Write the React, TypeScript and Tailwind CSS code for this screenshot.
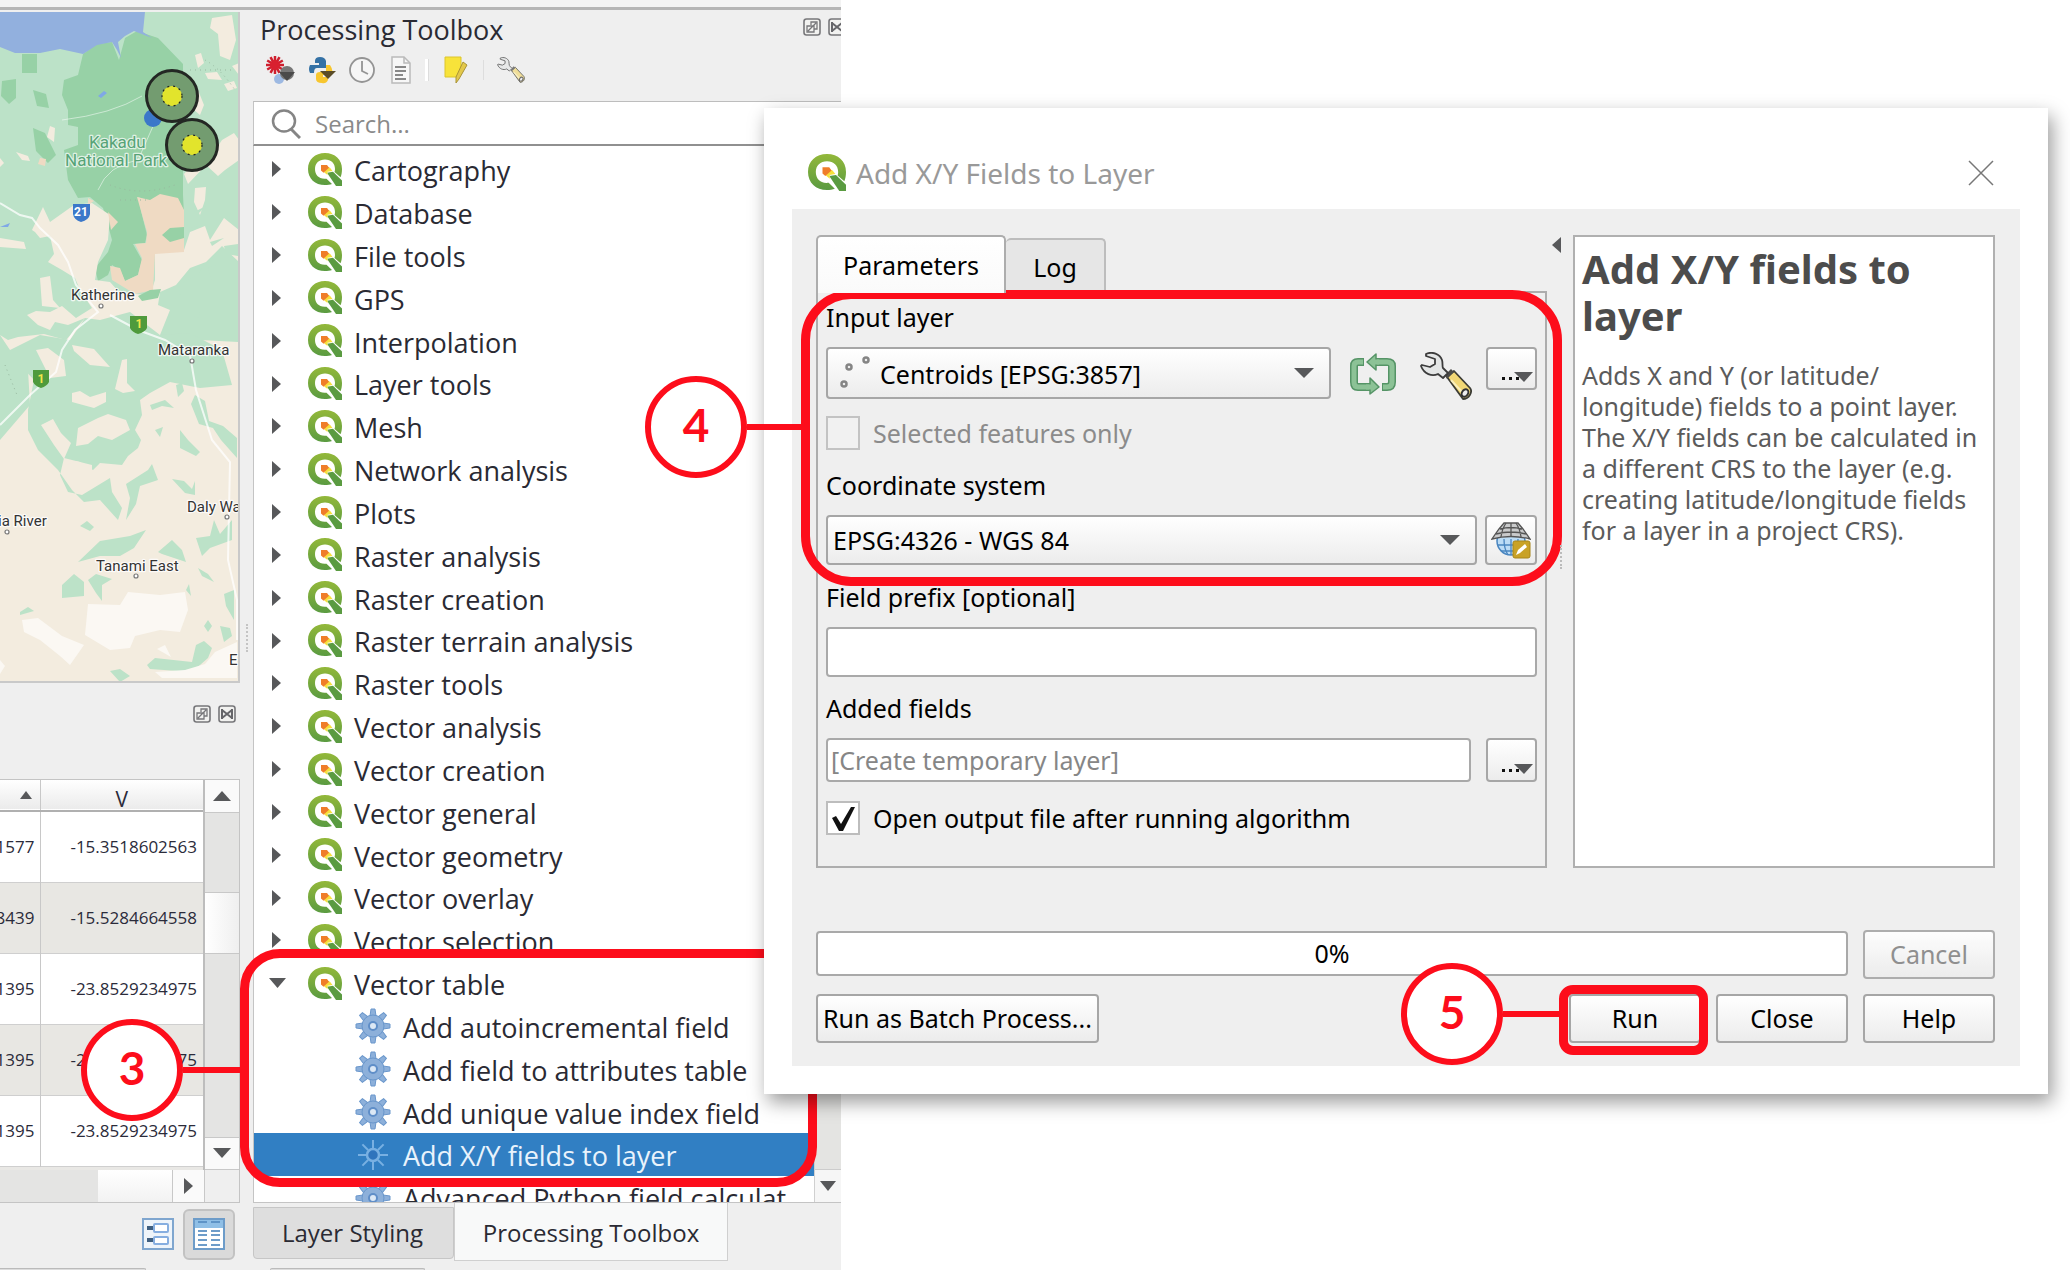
import React from 'react';

const CATEGORIES = [
  'Cartography', 'Database', 'File tools', 'GPS', 'Interpolation', 'Layer tools', 'Mesh',
  'Network analysis', 'Plots', 'Raster analysis', 'Raster creation', 'Raster terrain analysis',
  'Raster tools', 'Vector analysis', 'Vector creation', 'Vector general', 'Vector geometry',
  'Vector overlay', 'Vector selection',
];
const ALGORITHMS = [
  'Add autoincremental field', 'Add field to attributes table', 'Add unique value index field',
  'Add X/Y fields to layer',
];
const ROWS = [
  ['1577', '-15.3518602563'],
  ['8439', '-15.5284664558'],
  ['1395', '-23.8529234975'],
  ['1395', '-23.8529234975'],
  ['1395', '-23.8529234975'],
];

/* ---------- icons ---------- */

function QgisLogo({ className }: { className: string }) {
  return (
    <svg viewBox="0 0 34 36" className={className} preserveAspectRatio="none" aria-hidden="true">
      <defs>
        <linearGradient id="qg" x1="0" y1="0" x2="0" y2="1">
          <stop offset="0" stopColor="#93b83a" />
          <stop offset="1" stopColor="#5a9b41" />
        </linearGradient>
      </defs>
      <path fill="url(#qg)" fillRule="evenodd" d="M17 0C7 0 0 7 0 17.500S7 35 17 35c2.500 0 5-.5 7-1.300L18.500 28C11 29 7 24 7 17.500S11 7 17 7 27 11 27 17.500c0 1.200-.2 2.300-.5 3.300L32.500 26.500c1-2.500 1.500-5.700 1.500-9C34 7 27 0 17 0z" />
      <path fill="#5a9b41" d="M19 21.500 25 20.500l9 9.500v6h-6z" />
      <path fill="#f6e03c" d="m19 14.500 3 1.500 2.500 3.500-5 1V24l-3.500-3z" />
      <path fill="#ef7d29" d="M13 13H19l2 3-5.500 5.500-2.500-2.500z" />
    </svg>
  );
}

function Gear({ selected = false }: { selected?: boolean }) {
  const fill = selected ? '#2f74bc' : '#8db0da';
  const line = selected ? '#78b0e2' : '#6a97cc';
  return (
    <svg viewBox="-18 -18 36 36" className="h-[36px] w-[36px] shrink-0" aria-hidden="true">
      {[0, 45, 90, 135, 180, 225, 270, 315].map((a) => (
        <path key={a} d={selected ? 'M0-7V-15' : 'M-3-10-2-17H2L3-10z'} fill={fill} stroke={line} strokeWidth={selected ? 2 : 1} transform={`rotate(${a})`} />
      ))}
      <circle r={selected ? 6 : 11} fill={fill} stroke={line} strokeWidth={selected ? 2.5 : 1} />
      {!selected && <circle r="4" fill="#dce8f5" stroke="#5f8ec8" strokeWidth="2" />}
    </svg>
  );
}

function Wrench({ className }: { className: string }) {
  return (
    <svg viewBox="0 0 52 48" className={className} aria-hidden="true">
      <path d="M27 25 34 19 50 36c3 4-1 11-7 11z" fill="#f1d775" stroke="#3c3c34" strokeWidth="1.800" strokeLinejoin="round" />
      <path d="m25 23 6-6 3 3-7 7z" fill="#4a4a48" />
      <path d="M6 2C12-1 20 2 22 8c1 3 0 6 1 8l5 5-5 5-5-4C12 25 4 22 1 14l1-1 8 2 5-3V7L6 4z" fill="#e4e6e6" stroke="#3c3c3c" strokeWidth="1.800" strokeLinejoin="round" />
      <path d="m31 28 12 13" stroke="#fbf0bb" strokeWidth="2" />
      <ellipse cx="45" cy="41" rx="3" ry="4" fill="#eee" stroke="#333" strokeWidth="2" transform="rotate(35 45 41)" />
    </svg>
  );
}

function Iterate() {
  return (
    <svg viewBox="0 0 48 42" className="h-[42px] w-[48px]" aria-hidden="true">
      {['#559466', '#8cc296'].map((c, i) => (
        <g key={c} fill="none" stroke={c} strokeWidth={i ? 5 : 8} strokeLinejoin="round">
          <path d={i ? 'M14 9H9Q5 9 5 13V29Q5 34 9 34H22' : 'M15 9H9Q5 9 5 13V29Q5 34 9 34H22'} />
          <path d={i ? 'M34 34H38Q43 34 43 29V13Q43 9 38 9H27' : 'M33 34H38Q43 34 43 29V13Q43 9 38 9H27'} />
        </g>
      ))}
      <path d="M27 1v16L18 9z" fill="#8cc296" stroke="#559466" strokeWidth="1.500" strokeLinejoin="round" />
      <path d="M21 25v16l9-7z" fill="#8cc296" stroke="#559466" strokeWidth="1.500" strokeLinejoin="round" />
      <path d="M25 9h5M17 34h6" stroke="#8cc296" strokeWidth="5" />
    </svg>
  );
}

function Globe() {
  return (
    <svg viewBox="0 0 40 38" className="h-[38px] w-[40px]" aria-hidden="true">
      <circle cx="20" cy="20" r="14" fill="#bcdcf5" stroke="#4a86c0" strokeWidth="1.500" />
      <path d="M7 24h26M10 30h20M20 18v16M13 18q0 10 4 16M27 18q0 10-4 16" fill="none" stroke="#4a86c0" strokeWidth="1.300" />
      <path d="M13 2h14l5 6 7 10q-19-5-38 0L8 8z" fill="#c9cacb" stroke="#555" strokeWidth="1.300" />
      <path d="M20 2v14M15 2q-4 6-5 14M25 2q4 6 5 14M9 8q11-3 22 0M5 13q15-4 30 0" fill="none" stroke="#555" strokeWidth="1.300" />
      <rect x="22" y="20" width="17" height="17" rx="2" fill="#c9a227" stroke="#a8861a" />
      <path d="m25 34 2-5 7-6 2 3-7 6z" fill="#fff" />
    </svg>
  );
}

function DockIcons() {
  return (
    <div className="flex gap-[7px]">
      {['Float panel', 'Close panel'].map((n, i) => (
        <button key={n} aria-label={n} className="h-[18px] w-[18px] shrink-0">
          <svg viewBox="0 0 18 18" className="h-full w-full">
            <rect x="1" y="1" width="16" height="16" rx="2.500" fill="#f2f2f0" stroke="#77777a" strokeWidth="1.600" />
            {i === 0 ? (
              <path d="M4 8h7v6H4zM8 7V4h6v7h-3M5 13l8-8" fill="none" stroke="#77777a" strokeWidth="1.300" />
            ) : (
              <path d="M4 5l10 8M14 5 4 13M4 4v10M14 4v10" fill="none" stroke="#66666a" strokeWidth="2" />
            )}
          </svg>
        </button>
      ))}
    </div>
  );
}

function Tri({ dir, className }: { dir: 'up' | 'down' | 'left' | 'right'; className: string }) {
  const d = { up: 'M0 10H10L5 0z', down: 'M0 0H10L5 10z', left: 'M10 0V10L0 5z', right: 'M0 0V10L10 5z' }[dir];
  return (
    <svg viewBox="0 0 10 10" preserveAspectRatio="none" className={className} aria-hidden="true">
      <path d={d} fill="#57585a" />
    </svg>
  );
}

/* ---------- map ---------- */

function MapCanvas() {
  const label = { fontFamily: 'Roboto, sans-serif', stroke: '#fff', strokeWidth: 2.5, paintOrder: 'stroke' as const, strokeLinejoin: 'round' as const };
  return (
    <svg viewBox="0 12 239 669" className="block h-[669px] w-full" preserveAspectRatio="xMinYMin slice" role="img" aria-label="Map canvas">
      <rect y="12" width="239" height="669" fill="#bce2c8" />
      <g fill="#97d1a6">
        <path d="M83 54 97 44 112 42 119 60 125 38 137 31 158 38 183 64V195L184 215 138 197 142 215 147 235 145 243 133 244 142 260 138 275 125 281 120 270 112 265 108 275 98 281 95 268 108 252 112 240 108 225 103 208 90 197 78 198 68 180 64 150 78 145V127L68 125V110L62 95 64 80 78 75Z" />
        <path d="M22 54h15v19H22zM2 81l14-2v19l-7 6-8-8zM33 90l13 4 3 14-12-2zM33 128l12 5 11 22-8 8-12-12z" />
      </g>
      <path d="M0 12H145L143 32 152 38 134 31 125 36 118 42 121 58 117 50 112 42 97 45 83 54 60 49 40 53 15 53 0 47Z" fill="#92b0de" />
      <path d="m98 96 6-5 3 2-6 5zM0 227l10-4-2 4z" fill="#7fa8e6" />
      <g fill="#f3ecdf">
        <path d="M212 18 232 15 236 40 230 60 220 56 218 34 210 28Z" />
        <path d="m195 55 6-2 3 10-6 5zM205 73l12-1 5 8-14-1zM224 84l10-3 3 7-9 3zM232 66l7-3v12zM196 85l8 20-4 10-7-6zM50 126l5 2-1 14-7-5zM16 152l12 4 2 5-8-1zM0 158l4 5-4 4z" />
        <path d="M184 174 196 160 206 150 214 152 222 140 234 133 239 140V160L225 170 218 176 206 165 188 184Z" />
        <path d="M195 188 206 187 205 200 200 215 194 202ZM0 238l24 4 2 7-26-2z" />
        <path d="M32 230 43 207 50 222 74 205 92 203 110 215 108 240 98 262 95 280 110 282 120 293 150 295 155 280V250L184 250 190 232 205 226 210 240 224 218 239 230V262L222 246 206 262 190 268 176 285 160 292 158 305 170 310 160 335 200 340 239 342V681H0V440L30 405 28 370 20 345 10 350 0 335 8 340 18 337 44 334 66 340 85 318 68 325 55 322 50 330 38 325 27 315 36 311 50 312 62 306 76 318 92 308 80 290 75 278 62 270 48 262 54 254 50 236 40 238 35 232Z" />
        <path d="M40 278 50 276 53 300 60 308 42 306Z" />
      </g>
      <path d="M137 197 150 200 160 194 178 198 184 210V252L155 254 153 290 135 294 112 280 110 266 120 268 125 281 138 275 142 258 135 244 146 243 147 232ZM88 198l6 3-6 4zM108 212l10 10-7 8zM40 158l6 1-1 7-7-2z" fill="#efdac3" />
      <g fill="#97d1a6">
        <path d="M162 235 170 228 184 227V238L170 242ZM138 296 150 290 161 289 158 298 142 301ZM201 363l10-3 2 10-11 1z" />
      </g>
      <g fill="#bce2c8">
        <path d="M20 345 40 335 70 340 85 318 100 320 130 312 160 335 190 333 222 350 232 385 200 388 170 382 150 393 140 400 142 415 135 430 141 440 138 448 128 456 122 465 100 463 93 470 80 462 64 458 60 475 68 492 82 495 110 478 112 492 122 508 118 520 100 500 84 502 72 490 58 470 38 450 28 430 28 410 34 380 20 365Z" />
        <path d="M174 300 184 282 198 275 202 268 200 276 188 288ZM208 268l8-3 4 8-8 7zM222 300l6-6 4 8-8 6zM192 316l8-4-2 6zM194 212l12-6-8 8zM210 242l14-4-12 8zM224 246l14-2v12l-12-2zM188 228l10-2-6 5z" />
        <path d="M150 405 165 400 174 408 162 406 152 410ZM176 385l6-2 2 8-6 6zM155 430l8-3-3 10zM180 430l8 10 12 12-4 4-16-8zM195 395l10 6 4 20 14 5 14 12v20l-16-18-8-12-14-4-8-20zM148 470l4-6 6 16-18 6-4 18-10 16 4-22-4-14zM172 479l12 2 8 8 3-8v14l-10-2z" />
        <path d="M78 562 100 541 130 536 146 530 134 548 120 556 100 556ZM158 552 172 540 182 550 186 562 162 554ZM62 585 74 574 84 582V596L62 598ZM88 580l8-6 16 5-10 6v16l-6-8zM80 526l7-5 7 6-4 4zM20 612l8-5 6 4-14 4zM196 538l14-2 4-16 6 14 12-14v20l-22 8-8 8zM198 568l10 6 6 8-12-6zM186 590l3-6 2 12zM204 626l4-6 4 6-4 6zM220 626l10 2 2 8-8 6zM224 594l10-4v30l-8-14z" />
        <path d="M147 665 155 658 192 662 196 645 204 641 212 648 208 658 192 672 150 669ZM110 671l10-2 10 7-10 6z" />
      </g>
      <g fill="#f3ecdf">
        <path d="M72 393 80 391 90 397 106 392V402L94 408 72 402ZM78 428l20-10 10-4 18 6 4 10-18 10-14-4-10 8-12 2zM41 425l12-6 8 14 10 10-7 16-10-14zM66 465l10-4 16 4v10l-12 6zM72 345l22 4 16 18-20-2-16-14zM122 360l5-1v24l8 8-12 2-8-4zM36 350l12-2 16 12 2 16-16 2z" />
      </g>
      <g fill="#fbf8f3">
        <path d="M88 604 120 605 128 592 160 595 185 592 188 610 180 632 160 630 135 636 130 648 110 650 85 635ZM22 620 38 618 62 636 84 645 70 665 60 656 40 640 24 632ZM0 660l5 6-5 8zM165 645l6 12-14-8zM155 672l30-2 20-6 10-12 22-10v36H162z" />
      </g>
      <g fill="none" stroke="#fff" strokeOpacity=".75" strokeWidth="2">
        <path d="M0 203 20 215 32 218 40 228 58 245 68 262 76 285 98 312 75 330 62 350 56 372 30 395 0 425" />
        <path d="M110 315 138 330 165 340 190 355 196 390 212 440 230 462 228 560 237 600V640" />
        <path d="M62 120q50-6 80-24M98 190q10-25 40-30l20-45" strokeWidth="1" strokeOpacity=".5" />
      </g>
      <g fill="none" stroke="#98b89f" strokeDasharray="1 4" strokeWidth="1">
        <path d="M190 70h45M205 60q15 8 30 30M110 185q30 12 65 0M5 365l12 30M120 200h30" />
      </g>
      <path d="M73 204h17v10q-1 6-9 8-7-2-8-8z" fill="#3b78c9" />
      <circle cx="153" cy="118" r="9" fill="#3b78c9" />
      <path d="M130 316h17v12q-2 4-9 6-6-2-8-6zM33 370h16v12q-2 4-8 6-6-2-8-6z" fill="#4f9a3c" />
      <g fontFamily="Roboto, sans-serif" fontWeight="700" fontSize="12" textAnchor="middle">
        <text x="81" y="216" fill="#fff">21</text>
        <text x="139" y="328" fill="#f2e64b">1</text>
        <text x="41" y="383" fill="#f2e64b">1</text>
      </g>
      <g {...label} fontSize="17" fill="#56a377" strokeOpacity=".7">
        <text x="89" y="148">Kakadu</text>
        <text x="65" y="166">National Park</text>
      </g>
      <g {...label} fontSize="15" fill="#333" strokeOpacity=".8">
        <text x="71" y="300">Katherine</text>
        <text x="158" y="355">Mataranka</text>
        <text x="187" y="512">Daly Wa</text>
        <text x="-7" y="526">ria River</text>
        <text x="96" y="571">Tanami East</text>
        <text x="229" y="665">E</text>
      </g>
      <g fill="#fff" stroke="#777" strokeWidth="1.200">
        {[[101, 306], [192, 361], [227, 517], [7, 532], [136, 576]].map(([x, y]) => (
          <circle key={x} cx={x} cy={y} r="2" />
        ))}
      </g>
      {[[172, 96], [192, 145]].map(([x, y]) => (
        <g key={x}>
          <circle cx={x} cy={y} r="25.500" fill="#739c70" stroke="#232723" strokeWidth="3" />
          <circle cx={x} cy={y} r="10" fill="#e2e42c" stroke="#232723" strokeWidth="1.200" strokeDasharray="2 4" />
        </g>
      ))}
    </svg>
  );
}

/* ---------- callouts ---------- */

function Callout({ n, className, line }: { n: string; className: string; line: string }) {
  return (
    <div className={`pointer-events-none absolute flex items-center ${className}`}>
      <div className="flex h-[102px] w-[102px] shrink-0 items-center justify-center rounded-full border-[6px] border-[#fd0d1b] bg-white pb-[4px] font-['Lato',sans-serif] text-[46px] leading-none font-bold text-[#fd0d1b]">
        {n}
      </div>
      <div className={`h-[6px] bg-[#fd0d1b] ${line}`} />
    </div>
  );
}

/* ---------- left column ---------- */

function AttributeTable() {
  return (
    <div className="border-y border-r border-[#c4c4c4]">
      <div className="flex">
        <div className="min-w-0 flex-1 overflow-hidden border-r-2 border-[#bdbdbd] bg-[#e9e8e5]">
          <table className="w-full table-fixed border-collapse font-['Open_Sans',sans-serif] text-[17px] text-[#2b2b3a]">
            <thead>
              <tr className="h-[31px] border-b-2 border-[#b0b0b0] bg-linear-to-b from-white to-[#ebebeb]">
                <th className="w-[40px] border-r border-[#c8c8c8]" aria-label="Sorted column">
                  <Tri dir="up" className="ml-[20px] h-[8px] w-[12px]" />
                </th>
                <th className="p-0 pt-[8px] text-[21px] leading-none font-normal">V</th>
              </tr>
            </thead>
            <tbody>
              {ROWS.map(([a, b], i) => (
                <tr key={i} className={`h-[71px] border-b border-[#cfcfcf] ${i % 2 ? 'bg-[#e8e7e3]' : 'bg-white'}`}>
                  <td className="border-r border-[#c8c8c8] pr-[5px]">
                    <div className="flex justify-end">{a}</div>
                  </td>
                  <td className="pr-[6px] text-right">{b}</td>
                </tr>
              ))}
            </tbody>
          </table>
          <div className="h-[3px]" />
        </div>
        <div className="flex w-[34px] flex-col bg-[#e4e4e3]">
          <button aria-label="Scroll up" className="flex h-[33px] items-center justify-center border-b border-[#c8c8c8] bg-[#fafafa]">
            <Tri dir="up" className="h-[10px] w-[18px]" />
          </button>
          <div className="h-[79px]" />
          <div className="h-[62px] border-y border-[#c8c8c8] bg-linear-to-r from-white to-[#efefef]" />
          <div className="flex-1" />
          <button aria-label="Scroll down" className="flex h-[33px] items-center justify-center border-y border-[#c8c8c8] bg-[#fafafa]">
            <Tri dir="down" className="h-[10px] w-[18px]" />
          </button>
        </div>
      </div>
      <div className="flex h-[32px]">
        <div className="w-[98px] bg-[#e4e4e3]" />
        <div className="flex-1 border-r border-[#c8c8c8] bg-linear-to-b from-white to-[#f2f2f2]" />
        <button aria-label="Scroll right" className="flex w-[32px] items-center justify-center border-r border-[#c8c8c8] bg-[#fafafa]">
          <Tri dir="right" className="h-[16px] w-[9px]" />
        </button>
        <div className="w-[34px]" />
      </div>
    </div>
  );
}

function LeftColumn() {
  return (
    <div className="flex w-[240px] shrink-0 flex-col pt-[2px]">
      <div className="border-r-2 border-b-2 border-[#c9c9c9]">
        <MapCanvas />
      </div>
      <div className="flex h-[96px] items-start justify-end pt-[22px] pr-[4px]">
        <DockIcons />
      </div>
      <AttributeTable />
      <div className="flex items-center justify-end gap-[9px] pt-[6px] pr-[5px]">
        <button aria-label="Form view" className="h-[32px] w-[32px]">
          <svg viewBox="0 0 32 32">
            <rect x="1" y="1" width="30" height="30" fill="#eef4fa" stroke="#7fa6cf" strokeWidth="2" />
            <path d="M5 10h7M5 22h7" stroke="#3f5f80" strokeWidth="4" />
            <rect x="12" y="6" width="14" height="8" rx="1" fill="#fff" stroke="#86aee0" strokeWidth="2" />
            <rect x="12" y="19" width="14" height="7" rx="1" fill="#fff" stroke="#86aee0" strokeWidth="2" />
          </svg>
        </button>
        <button aria-label="Table view" className="flex h-[51px] w-[52px] items-center justify-center rounded-md border-2 border-[#c2c2c2] bg-[#dadada]">
          <svg viewBox="0 0 32 32" className="h-[32px] w-[32px]">
            <rect x="1" y="1" width="30" height="30" fill="#fff" stroke="#6d9cc9" strokeWidth="2" />
            <path d="M2 2h28v8H2z" fill="#8fbfe6" />
            <path d="M5 4h9M18 4h9" stroke="#4f86bd" strokeWidth="1.500" />
            <path d="M5 13h9M18 13h9M5 17h9M18 17h9M5 22h9M18 22h9M5 27h9M18 27h9" stroke="#6d9cc9" strokeWidth="2" />
          </svg>
        </button>
      </div>
      <div className="mt-auto h-[2px] w-[146px] rounded-tr-md border-t border-r border-[#bbb] bg-[#ddd]" />
    </div>
  );
}

/* ---------- processing toolbox ---------- */

function Toolbar() {
  const b = 'flex h-[32px] items-center justify-center';
  return (
    <div className="flex h-[32px] items-center pl-[12px]">
      <button aria-label="Models" className={`w-[32px] ${b}`}>
        <svg viewBox="0 0 30 28" className="h-[28px] w-[30px]">
          {[0, 30, 60, 90, 120, 150].map((a) => (
            <path key={a} d="M9 0V18" stroke="#cf1f2e" strokeWidth="2.500" transform={`rotate(${a} 9 9)`} />
          ))}
          <circle cx="9" cy="9" r="5" fill="#d8202f" />
          <circle cx="13" cy="23" r="5" fill="#9db9e2" />
          <circle cx="21" cy="17" r="7" fill="#777" />
          <path d="M13 16h16l-8 9z" fill="#4a4a4a" />
        </svg>
      </button>
      <button aria-label="Scripts" className={`ml-[9px] w-[32px] ${b}`}>
        <svg viewBox="0 0 30 28" className="h-[28px] w-[30px]">
          <path d="M8 5q0-4 5-4t6 4v7h-9q-3 0-3 5H3q-2-4 0-8h9V7H8z" fill="#3471a5" />
          <path d="M19 9h4q4 6 1 10h-8v2h5v3q-2 4-6 3-6 0-6-4v-4q0-3 4-3h6z" fill="#f7c62f" />
          <path d="M13 15h16l-8 8z" fill="#5a4c26" />
        </svg>
      </button>
      <button aria-label="History" className={`ml-[8px] w-[32px] ${b}`}>
        <svg viewBox="0 0 28 28" className="h-[28px] w-[28px]" fill="#f6f6f6" stroke="#949494" strokeWidth="1.800">
          <circle cx="14" cy="14" r="12" />
          <path d="M14 5v10l6 3" fill="none" />
        </svg>
      </button>
      <button aria-label="Results viewer" className={`ml-[8px] w-[30px] ${b}`}>
        <svg viewBox="0 0 20 28" className="h-[28px] w-[20px]">
          <path d="M1 1h12l6 6v20H1z" fill="#f7f7f7" stroke="#bbb" strokeWidth="1.500" />
          <path d="M4 11h11M4 15h11M4 19h8M4 23h11" stroke="#888" strokeWidth="1.800" />
          <path d="M13 1v6h6" fill="none" stroke="#bbb" strokeWidth="1.500" />
        </svg>
      </button>
      <div className="ml-[9px] h-[22px] w-[4px] border-r border-[#ddd] bg-white" />
      <button aria-label="Edit features in place" className={`ml-[12px] w-[30px] ${b}`}>
        <svg viewBox="0 0 24 28" className="h-[28px] w-[24px]">
          <path d="M1 1h16v12l-4 8H1z" fill="#f8e33a" stroke="#dcc52c" />
          <path d="m19 6 4 3-8 14-3 4v-6z" fill="#e3c84a" stroke="#a99437" />
        </svg>
      </button>
      <div className="ml-[12px] h-[20px] w-px bg-[#ddd]" />
      <button aria-label="Options" className={`ml-[11px] w-[32px] opacity-70 ${b}`}>
        <Wrench className="h-[28px] w-[28px]" />
      </button>
    </div>
  );
}

function Toolbox() {
  return (
    <div className="relative flex min-w-0 flex-1 flex-col font-['Open_Sans',sans-serif] text-[27px] text-[#2a2a33]">
      <div className="flex h-[44px] items-center justify-between overflow-hidden pb-[3px] pl-[7px]">
        <h2 className="whitespace-nowrap">Processing Toolbox</h2>
        <div className="-mr-[5px] pb-[7px]">
          <DockIcons />
        </div>
      </div>
      <Toolbar />
      <label className="mt-[15px] flex h-[45px] items-center gap-[14px] border-t border-b-2 border-l border-t-[#bdbdbd] border-b-[#909090] border-l-[#c4c4c4] bg-white pt-[2px] pl-[17px]">
        <svg viewBox="0 0 30 30" className="h-[30px] w-[30px]" fill="none" stroke="#858585" strokeWidth="2.500" aria-hidden="true">
          <ellipse cx="13" cy="12" rx="11" ry="10.500" />
          <path d="m20 20 9 9" strokeWidth="3" />
        </svg>
        <input aria-label="Search" placeholder="Search..." className="min-w-0 flex-1 bg-transparent text-[24px] outline-none placeholder:text-[#8a8a8a]" />
      </label>
      <div className="flex h-[1057px] overflow-hidden border-b border-l border-[#c4c4c4] bg-white">
        <div role="tree" className="min-w-0 flex-1 overflow-hidden pt-[2px]">
          <div className="grid h-[1028px] auto-rows-fr">
            {CATEGORIES.map((c) => (
              <div key={c} role="treeitem" className="flex items-center pl-[18px] whitespace-nowrap">
                <Tri dir="right" className="h-[16px] w-[9px]" />
                <QgisLogo className="mr-[12px] ml-[27px] h-[33px] w-[34px]" />
                <span className="pt-[4px]">{c}</span>
              </div>
            ))}
            <div role="treeitem" aria-expanded="true" className="flex items-center pl-[15px] whitespace-nowrap">
              <Tri dir="down" className="h-[10px] w-[17px]" />
              <QgisLogo className="mr-[12px] ml-[22px] h-[33px] w-[34px]" />
              <span className="pt-[4px]">Vector table</span>
            </div>
            {ALGORITHMS.map((a, i) => (
              <div key={a} role="treeitem" className={`flex items-center gap-[12px] pl-[101px] whitespace-nowrap ${i === 3 ? 'bg-[#317fc3] text-[#e9f3fc]' : ''}`}>
                <Gear selected={i === 3} />
                <span className="pt-[4px]">{a}</span>
              </div>
            ))}
          </div>
          <div role="treeitem" className="flex h-[43px] items-center gap-[12px] pl-[101px] whitespace-nowrap">
            <Gear />
            <span className="pt-[4px]">Advanced Python field calculat</span>
          </div>
        </div>
        <div className="flex w-[27px] flex-col border-l border-[#d0d0d0] bg-[#e4e4e2]">
          <div className="flex-1" />
          <button aria-label="Scroll down" className="flex h-[33px] items-center justify-center border-t border-[#ccc] bg-[#f6f6f6]">
            <Tri dir="down" className="h-[10px] w-[16px]" />
          </button>
        </div>
      </div>
      <div role="tablist" className="flex items-start text-[24px]">
        <button role="tab" className="mt-[4px] h-[52px] w-[201px] rounded-b border border-[#c6c6c6] bg-[#dedede] pr-[2px]">Layer Styling</button>
        <button role="tab" aria-selected="true" className="h-[58px] w-[274px] border border-t-0 border-[#cfcfcf] bg-[#f8f9f9] pt-[3px]">Processing Toolbox</button>
      </div>
      <div className="mt-auto ml-[17px] h-[2px] w-[155px] rounded-t-md border border-b-0 border-[#bbb] bg-[#ddd]" />
      <div className="pointer-events-none absolute top-[939px] right-[24px] -left-[13px] h-[238px] rounded-[40px] border-[9px] border-[#fd0d1b]" />
      <Callout n="3" className="top-[1009px] -left-[172px]" line="w-[60px]" />
    </div>
  );
}

/* ---------- dialog ---------- */

const BTN = 'rounded-[4px] border-2 border-[#a6a6a6] bg-linear-to-b from-white to-[#ececec]';
const FIELD = 'rounded-[4px] border-2 border-[#a9a9a9] bg-white';

function Combo({ id, value, className, pad, children }: { id: string; value: string; className: string; pad: string; children?: React.ReactNode }) {
  return (
    <div className={`relative flex min-w-0 flex-1 ${className}`}>
      <select id={id} className={`w-full appearance-none pr-[50px] text-black ${pad} ${BTN}`}>
        <option>{value}</option>
      </select>
      {children}
      <Tri dir="down" className="pointer-events-none absolute top-1/2 right-[17px] h-[10px] w-[20px] -translate-y-1/2" />
    </div>
  );
}

function More({ className }: { className: string }) {
  return (
    <button aria-label="More options" className={`flex w-[51px] items-end justify-end pr-[2px] pb-[6px] ${BTN} ${className}`}>
      <svg viewBox="0 0 32 10" className="h-[10px] w-[32px]">
        <path d="M1 5h3v3H1zM8 5h3v3H8zM15 5h3v3h-3z" fill="#111" />
        <path d="M13 0h19l-9 10z" fill="#57585a" />
      </svg>
    </button>
  );
}

function Parameters() {
  const label = 'block h-[36px] leading-[34px]';
  return (
    <div className="relative border-2 border-[#adadad] px-[8px] pt-[7px] pb-[31px]">
      <label htmlFor="layer" className={label}>Input layer</label>
      <div className="mt-[11px] flex h-[52px] items-start">
        <Combo id="layer" value="Centroids [EPSG:3857]" className="h-[52px]" pad="pt-[2px] pl-[52px]">
          <svg viewBox="0 0 32 34" className="pointer-events-none absolute top-[8px] left-[13px] h-[34px] w-[32px]" fill="#eee" stroke="#858585" strokeWidth="2.500">
            <circle cx="27" cy="5" r="2.500" />
            <circle cx="10" cy="12" r="2.500" />
            <circle cx="5" cy="29" r="2.500" />
          </svg>
        </Combo>
        <button aria-label="Iterate over this layer" className="mt-[6px] ml-[18px]"><Iterate /></button>
        <button aria-label="Advanced options" className="mt-[5px] mr-[14px] ml-[23px]"><Wrench className="h-[48px] w-[52px]" /></button>
        <More className="h-[43px]" />
      </div>
      <div className="mt-[17px] flex h-[34px] items-center gap-[13px] text-[#8b8b8b]">
        <input id="sel" type="checkbox" disabled className="h-[34px] w-[34px] appearance-none border-2 border-[#c3c3c3] bg-[#f1f1f1]" />
        <label htmlFor="sel">Selected features only</label>
      </div>
      <label htmlFor="crs" className={`mt-[18px] ${label}`}>Coordinate system</label>
      <div className="mt-[11px] flex h-[50px] gap-[8px]">
        <Combo id="crs" value="EPSG:4326 - WGS 84" className="" pad="pl-[5px]" />
        <button aria-label="Select CRS" className={`flex w-[52px] items-center justify-center ${BTN}`}><Globe /></button>
      </div>
      <label htmlFor="prefix" className={`mt-[15px] ${label}`}>Field prefix [optional]</label>
      <input id="prefix" className={`mt-[11px] block h-[50px] w-full px-[5px] ${FIELD}`} />
      <label htmlFor="out" className={`mt-[14px] ${label}`}>Added fields</label>
      <div className="mt-[11px] flex h-[44px] gap-[15px]">
        <input id="out" placeholder="[Create temporary layer]" className={`min-w-0 flex-1 px-[3px] placeholder:text-[#868686] ${FIELD}`} />
        <More className="h-[44px]" />
      </div>
      <div className="mt-[19px] flex h-[34px] items-center gap-[13px]">
        <span className="relative h-[34px] w-[34px]">
          <input id="open" type="checkbox" defaultChecked className="peer block h-[34px] w-[34px] appearance-none border-2 border-[#bdbdbd] bg-white" />
          <svg viewBox="0 0 34 34" className="pointer-events-none absolute inset-0 hidden peer-checked:block">
            <path d="M6 17 10 15 15 23 25 6 29 6 17 30H13z" fill="#111" />
          </svg>
        </span>
        <label htmlFor="open">Open output file after running algorithm</label>
      </div>
      <div className="pointer-events-none absolute -top-[3px] -right-[17px] -left-[17px] h-[296px] rounded-[50px] border-[9px] border-[#fd0d1b]" />
      <Callout n="4" className="top-[83px] -left-[173px]" line="w-[58px]" />
    </div>
  );
}

function Dialog() {
  const b = `h-[49px] w-[132px] shrink-0 ${BTN}`;
  return (
    <div role="dialog" aria-label="Add X/Y Fields to Layer" className="absolute top-[108px] right-[22px] left-[764px] bg-white p-[28px] font-['Noto_Sans',sans-serif] text-[25px] leading-[31px] text-black shadow-[4px_8px_18px_rgba(0,0,0,0.4)]">
      <div className="flex h-[73px] items-center pr-[26px] pl-[16px]">
        <QgisLogo className="h-[37px] w-[38px]" />
        <h1 className="ml-[10px] pt-[2px] text-[28px] text-[#999]">Add X/Y Fields to Layer</h1>
        <button aria-label="Close dialog" className="ml-auto">
          <svg viewBox="0 0 26 26" className="h-[26px] w-[26px]" stroke="#777" strokeWidth="1.500"><path d="M1 1l24 24M25 1 1 25" /></svg>
        </button>
      </div>
      <div className="bg-[#efefef] px-[25px] pt-[26px] pb-[23px] pl-[24px]">
        <div className="flex">
          <div className="min-w-0 flex-1">
            <div role="tablist" className="flex h-[56px] items-end">
              <button role="tab" aria-selected="true" className="z-1 -mb-[2px] h-[58px] w-[190px] rounded-t-[5px] border-2 border-b-0 border-[#adadad] bg-linear-to-b from-white to-[#fafafa]">Parameters</button>
              <button role="tab" className="h-[53px] w-[100px] rounded-t-[5px] border-2 border-b-0 border-l-0 border-[#bdbdbd] bg-[#e6e6e6] pt-[4px]">Log</button>
            </div>
            <Parameters />
          </div>
          <div className="relative w-[26px]">
            <Tri dir="left" className="absolute top-[2px] left-[5px] h-[16px] w-[9px]" />
            <div className="absolute top-[310px] left-[13px] h-[24px] border-l-2 border-dotted border-[#bbb]" />
          </div>
          <div className="w-[422px] border-2 border-[#b0b0b0] bg-white px-[7px] pt-[8px] text-[#5b5b5b]">
            <h2 className="text-[40px] leading-[47px] font-bold text-[#4c4c4c]">Add X/Y fields to layer</h2>
            <p className="mt-[21px]">
              Adds X and Y (or latitude/<wbr />longitude) fields to a point layer. The X/Y fields can be calculated in a different CRS to the layer (e.g. creating latitude/longitude fields for a layer in a project CRS).
            </p>
          </div>
        </div>
        <div className="mt-[62px] flex items-start gap-[15px]">
          <div role="progressbar" aria-valuenow={0} className={`mt-[1px] flex h-[45px] flex-1 items-center justify-center ${FIELD}`}>0%</div>
          <button disabled className={`text-[#858585] opacity-90 ${b}`}>Cancel</button>
        </div>
        <div className="relative mt-[15px] flex gap-[15px]">
          <button className={`mr-auto h-[49px] px-[5px] ${BTN}`}>Run as Batch Process...</button>
          <div className="relative">
            <button className={b}>Run</button>
            <div className="pointer-events-none absolute -top-[9px] -right-[7px] -left-[10px] h-[70px] rounded-[14px] border-[9px] border-[#fd0d1b]" />
            <Callout n="5" className="-top-[31px] -left-[168px]" line="w-[60px]" />
          </div>
          <button className={b}>Close</button>
          <button className={b}>Help</button>
        </div>
      </div>
    </div>
  );
}

export default function App() {
  return (
    <main className="relative min-h-screen overflow-hidden bg-white">
      <div className="flex min-h-screen w-[40.63%] min-w-[700px] flex-col overflow-hidden bg-[#efefef]">
        <div className="h-[10px] shrink-0 border-b-3 border-[#b5b5b5] bg-[#f3f3f3]" />
        <div className="flex flex-1">
          <LeftColumn />
          <div className="flex w-[13px] shrink-0 items-end justify-center">
            <div className="mb-[618px] h-[28px] border-l-2 border-dotted border-[#c4c4c4]" />
          </div>
          <Toolbox />
        </div>
      </div>
      <Dialog />
    </main>
  );
}
